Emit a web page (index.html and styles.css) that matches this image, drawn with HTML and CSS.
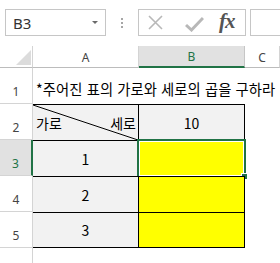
FILE: index.html
```html
<!DOCTYPE html>
<html lang="ko">
<head>
    <meta charset="UTF-8">
    <title>Sheet</title>
    <link rel="stylesheet" href="styles.css">
</head>
<body>
    <div class="formula-bar">
        <div class="name-box">
            <span>B3</span>
            <span class="caret"></span>
        </div>
        <div class="grip">
            <i></i><i></i><i></i>
        </div>
        <div class="fx-box">
            <svg class="icon-x" width="15" height="15" viewBox="0 0 15 15">
                <path d="M1 1 L14 14 M14 1 L1 14" stroke="#b8b8b8" stroke-width="1.6" fill="none"/>
            </svg>
            <svg class="icon-ok" width="19" height="16" viewBox="0 0 19 16">
                <path d="M1 9 L6.5 14 L18 2" stroke="#b8b8b8" stroke-width="3" fill="none"/>
            </svg>
            <span class="fx">fx</span>
        </div>
        <div class="formula-input"></div>
    </div>

    <div class="sheet">
        <div class="corner"><span class="tri"></span></div>
        <div class="col-head">A</div>
        <div class="col-head active">B</div>
        <div class="col-head">C</div>

        <div class="row-head">1</div>
        <div class="cell title">*주어진 표의 가로와 세로의 곱을 구하라</div>
        <div class="cell"></div>
        <div class="cell"></div>

        <div class="row-head">2</div>
        <div class="cell boxed gray split">
            <svg class="diag" viewBox="0 0 100 100" preserveAspectRatio="none">
                <line x1="0" y1="0" x2="100" y2="100" stroke="#000" stroke-width="1" vector-effect="non-scaling-stroke"/>
            </svg>
            <span>가로</span><span>세로</span>
        </div>
        <div class="cell boxed gray">10</div>
        <div class="cell"></div>

        <div class="row-head active">3</div>
        <div class="cell boxed gray">1</div>
        <div class="cell boxed yellow selected">
            <span class="sel"></span>
            <span class="handle"></span>
        </div>
        <div class="cell"></div>

        <div class="row-head">4</div>
        <div class="cell boxed gray">2</div>
        <div class="cell boxed yellow"></div>
        <div class="cell"></div>

        <div class="row-head">5</div>
        <div class="cell boxed gray last">3</div>
        <div class="cell boxed yellow last"></div>
        <div class="cell"></div>

        <div class="row-head"></div>
        <div class="cell"></div>
        <div class="cell"></div>
        <div class="cell"></div>
    </div>
</body>
</html>
```

FILE: styles.css
```css
body {
    margin: 0;
    width: 280px;
    height: 263px;
    overflow: hidden;
    background: #fff;
    font-family: "Noto Sans", "Open Sans", sans-serif;
}

.formula-bar {
    height: 46px;
    display: flex;
    align-items: flex-start;
    padding: 9px 0 0 5px;
    box-sizing: border-box;
}
.name-box {
    width: 101px;
    height: 27px;
    box-sizing: border-box;
    border: 1px solid #c6c6c6;
    display: flex;
    align-items: center;
    justify-content: space-between;
    padding: 0 7px 0 7px;
    font-size: 15px;
    color: #333;
}
.caret {
    width: 0;
    height: 0;
    border-left: 3px solid transparent;
    border-right: 3px solid transparent;
    border-top: 3px solid #6a6a6a;
}
.grip {
    width: 32px;
    height: 27px;
    display: flex;
    flex-direction: column;
    align-items: center;
    justify-content: center;
    gap: 2px;
}
.grip i {
    width: 2px;
    height: 2px;
    background: #a6a6a6;
}
.fx-box {
    width: 108px;
    height: 27px;
    box-sizing: border-box;
    border: 1px solid #c6c6c6;
    display: flex;
    align-items: center;
    padding-left: 9px;
}
.icon-x {
    margin-right: 22px;
}
.icon-ok {
    margin-right: 15px;
    margin-top: 2px;
}
.fx {
    font-family: "Liberation Serif", serif;
    font-style: italic;
    font-weight: bold;
    font-size: 21px;
    color: #555;
    letter-spacing: -1px;
    line-height: 1;
    margin-top: -2px;
}
.formula-input {
    margin-left: 4px;
    flex: 1;
    height: 27px;
    box-sizing: border-box;
    border: 1px solid #c6c6c6;
    border-right: none;
}

.sheet {
    display: grid;
    grid-template-columns: 33px 106px 106px 35px;
    grid-template-rows: 22px repeat(5, 36px) 17px;
}
.corner {
    position: relative;
    border-right: 1px solid #d4d4d4;
    border-bottom: 1px solid #bcbcbc;
}
.tri {
    position: absolute;
    right: 1px;
    bottom: 2px;
    width: 0;
    height: 0;
    border-left: 15px solid transparent;
    border-bottom: 15px solid #dcdcdc;
}
.col-head {
    display: flex;
    align-items: center;
    justify-content: center;
    border-right: 1px solid #d4d4d4;
    border-bottom: 1px solid #bcbcbc;
    font-size: 12px;
    color: #444;
    padding-top: 1px;
}
.col-head.active {
    background: #e1e1e1;
    color: #217346;
    border-bottom: 2px solid #217346;
    border-right-color: #c6c6c6;
}
.row-head {
    display: flex;
    align-items: flex-end;
    justify-content: center;
    border-right: 1px solid #d4d4d4;
    border-bottom: 1px solid #d4d4d4;
    font-size: 12px;
    color: #444;
    padding-bottom: 3px;
    box-sizing: border-box;
}
.row-head.active {
    background: #e1e1e1;
    color: #217346;
    border-right: 2px solid #217346;
}

.cell {
    position: relative;
    display: flex;
    align-items: center;
    justify-content: center;
    font-family: "Noto Sans CJK KR", "Noto Sans", sans-serif;
    font-size: 14px;
    color: #000;
    box-sizing: border-box;
}
.cell.title {
    justify-content: flex-start;
    white-space: nowrap;
    padding: 5px 0 0 3px;
    font-size: 14.3px;
    letter-spacing: 0.1px;
}
.boxed {
    border-top: 1px solid #000;
    border-right: 1px solid #000;
}
.boxed.last {
    border-bottom: 1px solid #000;
}
.gray {
    background: #f2f2f2;
}
.yellow {
    background: #ffff00;
}
.split {
    justify-content: space-between;
    padding: 0 2px 0 3px;
}
.diag {
    position: absolute;
    left: 0;
    top: 0;
    width: 100%;
    height: 100%;
}
.sel {
    position: absolute;
    left: -2px;
    top: -2px;
    right: -2px;
    bottom: -2px;
    border: 2px solid #217346;
    box-shadow: inset 0 0 0 1px #fff;
}
.handle {
    position: absolute;
    right: -4px;
    bottom: -4px;
    width: 5px;
    height: 5px;
    background: #217346;
    border: 1px solid #fff;
}
```
